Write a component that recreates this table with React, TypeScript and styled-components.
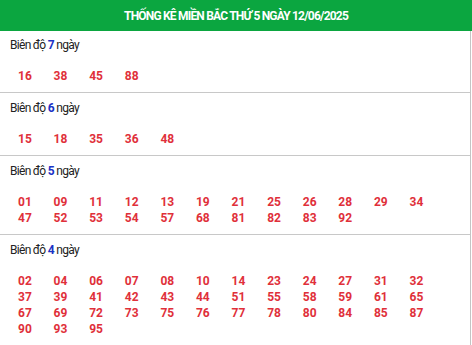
import styled, { createGlobalStyle } from "styled-components";

const GlobalStyle = createGlobalStyle`
  html, body {
    margin: 0;
    padding: 0;
    background: #fff;
  }
  body {
    font-family: Roboto, "Liberation Sans", Arial, sans-serif;
  }
`;

const Wrapper = styled.div`
  width: 472px;
`;

const Header = styled.div`
  height: 31px;
  background: #0ba640;
  color: #fff;
  display: flex;
  align-items: center;
  justify-content: center;
  font-size: 12px;
  font-weight: 700;
  letter-spacing: -0.8px;
`;

const Body = styled.div`
  width: 470px;
  border-right: 1px solid #c4c4c4;
`;

const Section = styled.section<{ $first?: boolean }>`
  padding: ${(p) => (p.$first ? "6px" : "7px")} 0 8px;
  border-top: ${(p) => (p.$first ? "none" : "1px solid #c8c8c8")};
`;

const Label = styled.div`
  padding-left: 10px;
  font-size: 12px;
  line-height: 16px;
  letter-spacing: -0.7px;
  color: #222;
  b {
    color: #1b33c6;
    font-weight: 700;
  }
`;

const NumberGrid = styled.div`
  margin-top: 15px;
  padding-left: 18px;
  display: grid;
  grid-template-columns: repeat(12, 35.6px);
`;

const Num = styled.span`
  font-size: 12px;
  font-weight: 700;
  line-height: 16px;
  color: #e0303a;
`;

interface IGroup {
  days: number;
  nums: string[];
}

const groups: IGroup[] = [
  { days: 7, nums: ["16", "38", "45", "88"] },
  { days: 6, nums: ["15", "18", "35", "36", "48"] },
  {
    days: 5,
    nums: "01 09 11 12 13 19 21 25 26 28 29 34 47 52 53 54 57 68 81 82 83 92".split(" "),
  },
  {
    days: 4,
    nums: "02 04 06 07 08 10 14 23 24 27 31 32 37 39 41 42 43 44 51 55 58 59 61 65 67 69 72 73 75 76 77 78 80 84 85 87 90 93 95".split(
      " "
    ),
  },
];

function App() {
  return (
    <Wrapper>
      <GlobalStyle />
      <Header>THỐNG KÊ MIỀN BẮC THỨ 5 NGÀY 12/06/2025</Header>
      <Body>
        {groups.map((g, i) => (
          <Section key={g.days} $first={i === 0}>
            <Label>
              Biên độ <b>{g.days}</b> ngày
            </Label>
            <NumberGrid>
              {g.nums.map((n) => (
                <Num key={n}>{n}</Num>
              ))}
            </NumberGrid>
          </Section>
        ))}
      </Body>
    </Wrapper>
  );
}

export default App;
